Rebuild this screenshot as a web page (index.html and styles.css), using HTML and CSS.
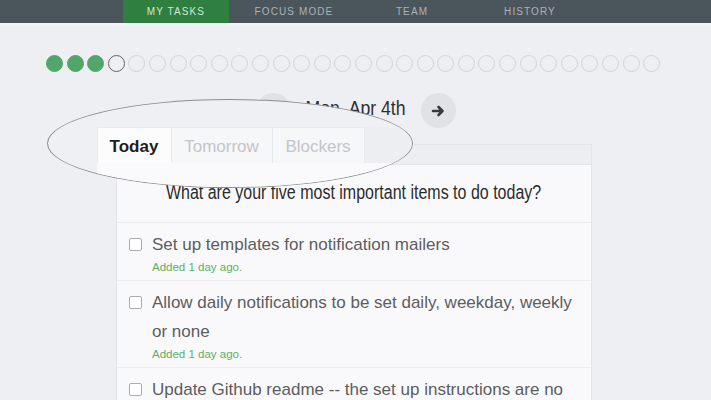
FILE: index.html
```html
<!DOCTYPE html>
<html>
<head>
<meta charset="utf-8">
<link rel="stylesheet" href="styles.css">
</head>
<body>
<nav class="topnav">
  <a class="navtab active">My Tasks</a>
  <a class="navtab">Focus Mode</a>
  <a class="navtab">Team</a>
  <a class="navtab">History</a>
</nav>
<main class="page">
  <div class="dots">
    <span class="dot done"></span><span class="dot done"></span><span class="dot done"></span><span class="dot current"></span>
    <span class="dot"></span><span class="dot"></span><span class="dot"></span><span class="dot"></span><span class="dot"></span><span class="dot"></span><span class="dot"></span><span class="dot"></span><span class="dot"></span><span class="dot"></span><span class="dot"></span><span class="dot"></span><span class="dot"></span><span class="dot"></span><span class="dot"></span><span class="dot"></span><span class="dot"></span><span class="dot"></span><span class="dot"></span><span class="dot"></span><span class="dot"></span><span class="dot"></span><span class="dot"></span><span class="dot"></span><span class="dot"></span><span class="dot"></span>
  </div>
  <div class="datenav">
    <span class="circbtn"><svg width="14" height="14" viewBox="0 0 14 14"><path d="M12 7H3M6.5 3L2.5 7l4 4" fill="none" stroke="#3a3a3a" stroke-width="2.6" stroke-linecap="round" stroke-linejoin="round"/></svg></span>
    <span class="date"><span class="cond">Mon, Apr 4th</span></span>
    <span class="circbtn"><svg width="14" height="14" viewBox="0 0 14 14"><path d="M2 7h9M7.5 3l4 4-4 4" fill="none" stroke="#3a3a3a" stroke-width="2.6" stroke-linecap="round" stroke-linejoin="round"/></svg></span>
  </div>
  <section class="panel">
    <div class="panel-head"></div>
    <div class="panel-body">
      <h2 class="question"><span class="cond">What are your five most important items to do today?</span></h2>
      <div class="item">
        <span class="check"></span>
        <div class="item-text">
          <p class="title">Set up templates for notification mailers</p>
          <p class="added">Added 1 day ago.</p>
        </div>
      </div>
      <div class="item">
        <span class="check"></span>
        <div class="item-text">
          <p class="title">Allow daily notifications to be set daily, weekday, weekly or none</p>
          <p class="added">Added 1 day ago.</p>
        </div>
      </div>
      <div class="item">
        <span class="check"></span>
        <div class="item-text">
          <p class="title">Update Github readme -- the set up instructions are no longer accurate</p>
          <p class="added">Added 1 day ago.</p>
        </div>
      </div>
    </div>
  </section>
  <div class="lens">
    <div class="lens-top"></div>
    <div class="lens-row">
      <div class="lens-gap"></div>
      <div class="lens-tabs">
        <span class="ltab active">Today</span>
        <span class="ltab">Tomorrow</span>
        <span class="ltab">Blockers</span>
        <span class="ltab-rest"></span>
      </div>
    </div>
    <div class="lens-row lens-bottom">
      <div class="lens-gap"></div>
      <div class="lens-body"></div>
    </div>
  </div>
</main>
</body>
</html>
```

FILE: styles.css
```css
* { box-sizing: border-box; }
html, body { margin: 0; padding: 0; }
body {
  background: #eeeff3;
  font-family: "Liberation Sans", Arial, sans-serif;
  width: 711px;
  height: 400px;
  overflow: hidden;
}
.topnav {
  display: flex;
  gap: 12px;
  background: #4b555c;
  padding-left: 123px;
  border-bottom: 3px solid #f4f5f8;
  height: 26px;
}
.navtab {
  width: 106px;
  height: 23px;
  display: flex;
  align-items: center;
  justify-content: center;
  font-size: 10px;
  letter-spacing: 1.1px;
  text-transform: uppercase;
  color: #aab2b7;
}
.navtab.active {
  background: #2f7f40;
  color: #cfe6d3;
}
.page {
  position: relative;
  padding-top: 29px;
}
.dots {
  display: flex;
  gap: 3.6px;
  padding-left: 46px;
}
.dot {
  width: 17px;
  height: 17px;
  border-radius: 50%;
  border: 1.5px solid #d2d3d8;
  flex: none;
}
.dot.done {
  background: #52a66a;
  border-color: #52a66a;
}
.dot.current {
  border-color: #626468;
}
.datenav {
  display: flex;
  align-items: center;
  justify-content: center;
  gap: 13px;
  margin-top: 21px;
}
.circbtn {
  width: 35px;
  height: 35px;
  border-radius: 50%;
  background: #e1e2e6;
  display: flex;
  align-items: center;
  justify-content: center;
}
.cond {
  display: inline-block;
  transform: scaleX(0.84);
  white-space: nowrap;
}
.date {
  width: 104px;
  display: flex;
  justify-content: center;
  font-size: 21px;
  color: #2e2e30;
  line-height: 26px;
  margin-bottom: 6px;
}
.panel {
  width: 476px;
  margin-left: 116px;
  margin-top: 16px;
  border: 1px solid #e4e5e9;
  border-bottom: none;
  background: #f9f9fb;
}
.panel-head {
  height: 20px;
  background: #eceef1;
  border-bottom: 1px solid #e4e5e9;
}
.question {
  margin: 0;
  padding: 15px 0 18px;
  text-align: center;
  font-weight: normal;
  font-size: 20px;
  line-height: 24px;
  color: #2b2b2d;
  border-bottom: 1px solid #ededf0;
}
.question .cond { transform: scaleX(0.8); }
.item {
  display: flex;
  align-items: flex-start;
  gap: 10px;
  padding: 7px 4px 5px 12px;
  border-bottom: 1px solid #ededf0;
}
.check {
  flex: none;
  width: 13px;
  height: 13px;
  border: 1px solid #a9abaf;
  border-radius: 2px;
  background: #fff;
  margin-top: 8px;
}
.item-text p { margin: 0; }
.title {
  font-size: 17px;
  line-height: 29px;
  color: #5c5d60;
}
.added {
  font-size: 11.5px;
  line-height: 16px;
  color: #5bb065;
}
.lens {
  position: absolute;
  left: 47px;
  top: 73px;
  width: 366px;
  height: 89px;
  border-radius: 50%;
  border: 1.5px solid #8e8e8e;
  overflow: hidden;
  background: #eff0f3;
  display: flex;
  flex-direction: column;
}
.lens-top { height: 27px; flex: none; }
.lens-row { display: flex; flex: none; }
.lens-gap { width: 48.5px; flex: none; }
.lens-tabs {
  display: flex;
  flex: 1;
  height: 36px;
  background: #eceef1;
}
.ltab {
  display: flex;
  align-items: center;
  justify-content: center;
  font-size: 17px;
  color: #c3c5c9;
  background: #f6f7f9;
  border: 1px solid #e9eaed;
  border-bottom: none;
  border-left: none;
  height: 36px;
  padding-top: 3px;
}
.ltab:nth-child(1) { width: 75px; }
.ltab:nth-child(2) { width: 101px; }
.ltab:nth-child(3) { width: 92px; }
.ltab.active {
  background: #fcfcfd;
  color: #1f1f21;
  font-weight: bold;
  border-left: 1px solid #e9eaed;
}
.ltab-rest { flex: 1; }
.lens-bottom { flex: 1; }
.lens-body {
  flex: 1;
  height: 40px;
  background: #fafafc;
}
```
